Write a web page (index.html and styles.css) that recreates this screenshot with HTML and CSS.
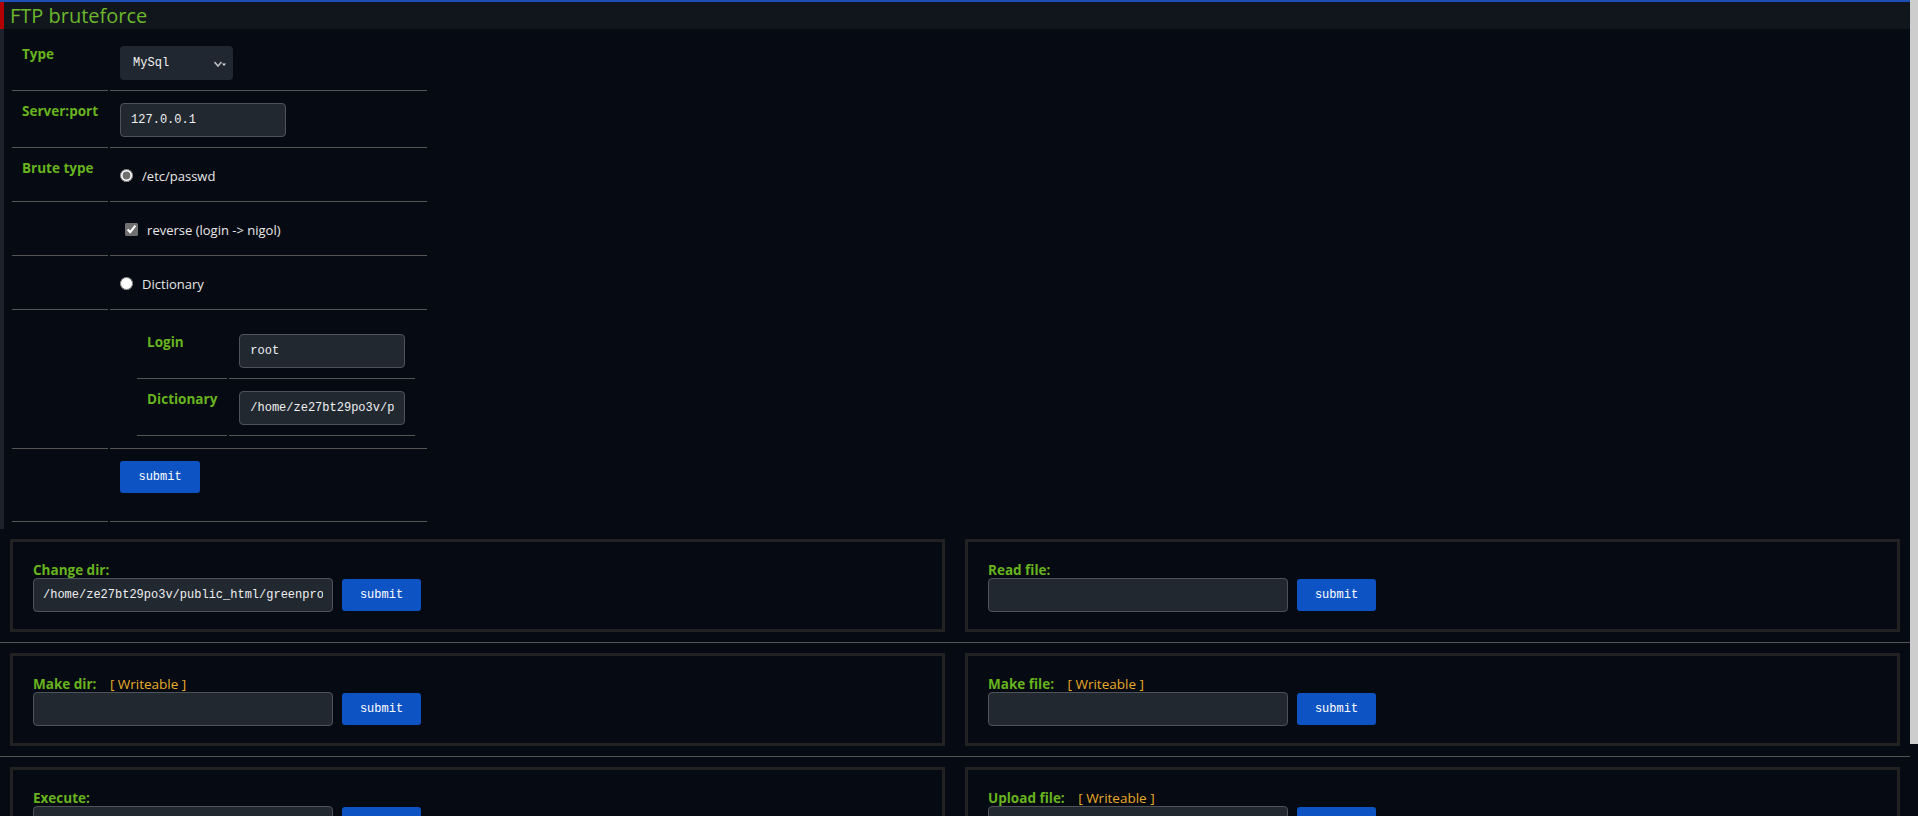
FILE: index.html
```html
<!DOCTYPE html>
<html lang="en">
<head>
    <meta charset="UTF-8">
    <meta name="viewport" content="width=device-width, initial-scale=1.0">
    <title>FTP bruteforce</title>
    <link rel="stylesheet" href="styles.css">
</head>
<body>
    <div class="page">
        <section class="panel">
            <div class="panel-title">FTP bruteforce</div>
            <div class="panel-body">
                <form>
                    <table class="brute">
                        <tr>
                            <td class="lbl">Type</td>
                            <td class="val">
                                <div class="field">
                                    <div class="select-wrap">
                                        <select name="proto">
                                            <option>MySql</option>
                                            <option>FTP</option>
                                            <option>PostgreSql</option>
                                        </select>
                                        <svg class="select-arrow" width="12" height="7" viewBox="0 0 12 7">
                                            <path d="M0.5 1 L4 5 L7.5 1" fill="none" stroke="#b9bcc0" stroke-width="1.6"/>
                                            <path d="M8 2.5 L12 2.5 L10 5 Z" fill="#d6d8da"/>
                                        </svg>
                                    </div>
                                </div>
                            </td>
                        </tr>
                        <tr>
                            <td class="lbl">Server:port</td>
                            <td class="val"><div class="field"><input type="text" class="txt" value="127.0.0.1"></div></td>
                        </tr>
                        <tr>
                            <td class="lbl">Brute type</td>
                            <td class="val">
                                <label class="opt"><input type="radio" name="type" value="1" checked class="radio">/etc/passwd</label>
                            </td>
                        </tr>
                        <tr>
                            <td class="lbl"></td>
                            <td class="val">
                                <label class="opt"><input type="checkbox" name="reverse" checked class="check">reverse (login -&gt; nigol)</label>
                            </td>
                        </tr>
                        <tr>
                            <td class="lbl"></td>
                            <td class="val">
                                <label class="opt"><input type="radio" name="type" value="2" class="radio">Dictionary</label>
                            </td>
                        </tr>
                        <tr>
                            <td class="lbl"></td>
                            <td class="val">
                                <table class="dict">
                                    <tr>
                                        <td class="lbl">Login</td>
                                        <td class="val"><input type="text" class="txt" value="root"></td>
                                    </tr>
                                    <tr>
                                        <td class="lbl">Dictionary</td>
                                        <td class="val"><input type="text" class="txt" value="/home/ze27bt29po3v/public_html/passwd.dic"></td>
                                    </tr>
                                </table>
                            </td>
                        </tr>
                        <tr>
                            <td class="lbl"></td>
                            <td class="val"><div class="actions"><button type="submit" class="btn">submit</button></div></td>
                        </tr>
                    </table>
                </form>
            </div>
        </section>

        <div class="tools">
            <div class="tools-row">
                <form class="box">
                    <div class="box-label">Change dir:</div>
                    <div class="box-field">
                        <input type="text" class="txt wide" value="/home/ze27bt29po3v/public_html/greenprofile">
                        <button type="submit" class="btn">submit</button>
                    </div>
                </form>
                <form class="box">
                    <div class="box-label">Read file:</div>
                    <div class="box-field">
                        <input type="text" class="txt wide">
                        <button type="submit" class="btn">submit</button>
                    </div>
                </form>
            </div>
            <div class="tools-row">
                <form class="box">
                    <div class="box-label">Make dir: <span class="writeable">[ Writeable ]</span></div>
                    <div class="box-field">
                        <input type="text" class="txt wide">
                        <button type="submit" class="btn">submit</button>
                    </div>
                </form>
                <form class="box">
                    <div class="box-label">Make file: <span class="writeable">[ Writeable ]</span></div>
                    <div class="box-field">
                        <input type="text" class="txt wide">
                        <button type="submit" class="btn">submit</button>
                    </div>
                </form>
            </div>
            <div class="tools-row">
                <form class="box">
                    <div class="box-label">Execute:</div>
                    <div class="box-field">
                        <input type="text" class="txt wide">
                        <button type="submit" class="btn">submit</button>
                    </div>
                </form>
                <form class="box">
                    <div class="box-label">Upload file: <span class="writeable">[ Writeable ]</span></div>
                    <div class="box-field">
                        <input type="text" class="txt wide">
                        <button type="submit" class="btn">submit</button>
                    </div>
                </form>
            </div>
        </div>
    </div>
    <div class="scrollbar"><div class="thumb"></div></div>
</body>
</html>
```

FILE: styles.css
```css
*{
    margin: 0;
    padding: 0;
}
html, body{
    height: 100%;
    overflow: hidden;
}
body{
    background-color: #060a12;
    color: #e6e6e6;
    font-family: "Open Sans", "DejaVu Sans", sans-serif;
    font-size: 13px;
    display: flex;
}
.page{
    flex: 1;
    border-top: 2px solid #1e4fb6;
}

/* right scrollbar */
.scrollbar{
    width: 8px;
    background-color: #060a12;
}
.thumb{
    height: 744px;
    background-color: #cdcdcd;
}

/* brute panel */
.panel-title{
    height: 27px;
    line-height: 27px;
    background-color: #11151c;
    border-left: 4px solid #b30000;
    padding-left: 6px;
    color: #6cb72c;
    font-size: 20px;
}
.panel-body{
    border-left: 4px solid #1c232d;
    padding: 5px 0 5px 6px;
}

table{
    border-spacing: 2px;
}
td{
    padding: 10px;
    border-bottom: 1px solid #555;
    vertical-align: top;
}
.lbl{
    color: #67b41f;
    font-weight: 700;
    font-size: 13.5px;
    line-height: 16px;
    white-space: nowrap;
}
.brute > tbody > tr > td.lbl{
    width: 76px;
}
.brute > tbody > tr > td.val{
    width: 296px;
}
.field{
    height: 34px;
    display: flex;
    align-items: center;
}
.opt{
    height: 31px;
    display: flex;
    align-items: center;
    color: #e8e8e8;
    font-size: 13px;
}
.radio{
    width: 13px;
    height: 13px;
    margin: 0 9px 0 0;
    accent-color: #6f6f6f;
}
.check{
    width: 13px;
    height: 13px;
    margin: 0 9px 0 5px;
    accent-color: #707070;
}
.actions{
    height: 50px;
}

.select-wrap{
    position: relative;
    width: 113px;
    height: 34px;
}
select{
    appearance: none;
    -webkit-appearance: none;
    width: 113px;
    height: 34px;
    background-color: #202730;
    color: #f2f2f2;
    border: none;
    border-radius: 4px;
    padding-left: 13px;
    font-family: "Liberation Mono", monospace;
    font-size: 12px;
    outline: none;
}
.select-arrow{
    position: absolute;
    right: 7px;
    top: 15px;
    pointer-events: none;
}

.txt{
    box-sizing: border-box;
    width: 166px;
    height: 34px;
    background-color: #212830;
    color: #f0f0f0;
    border: 1px solid #4e5359;
    border-radius: 4px;
    padding: 0 10px;
    font-family: "Liberation Mono", monospace;
    font-size: 12px;
    outline: none;
}
.txt.wide{
    width: 300px;
    padding: 0 9px;
}

.btn{
    width: 80px;
    height: 32px;
    background-color: #0e53c3;
    color: #fff;
    border: none;
    border-radius: 3px;
    font-family: "Liberation Mono", monospace;
    font-size: 12px;
}

.dict{
    margin-left: 15px;
}
.dict td.lbl{
    width: 69px;
}
.dict td.val{
    width: 166px;
}

/* tool boxes */
.tools-row{
    display: grid;
    grid-template-columns: 1fr 1fr;
    border-bottom: 1px solid #555;
}
.box{
    margin: 10px;
    border: 3px solid #222;
    padding: 20px 20px 17px;
}
.box-label{
    color: #67b41f;
    font-weight: 700;
    font-size: 13.5px;
    line-height: 16px;
}
.writeable{
    color: #e8ab2a;
    font-weight: 400;
    margin-left: 10px;
}
.box-field{
    display: flex;
    align-items: center;
    gap: 9px;
}
.box-field .btn{
    width: 79px;
}
```
